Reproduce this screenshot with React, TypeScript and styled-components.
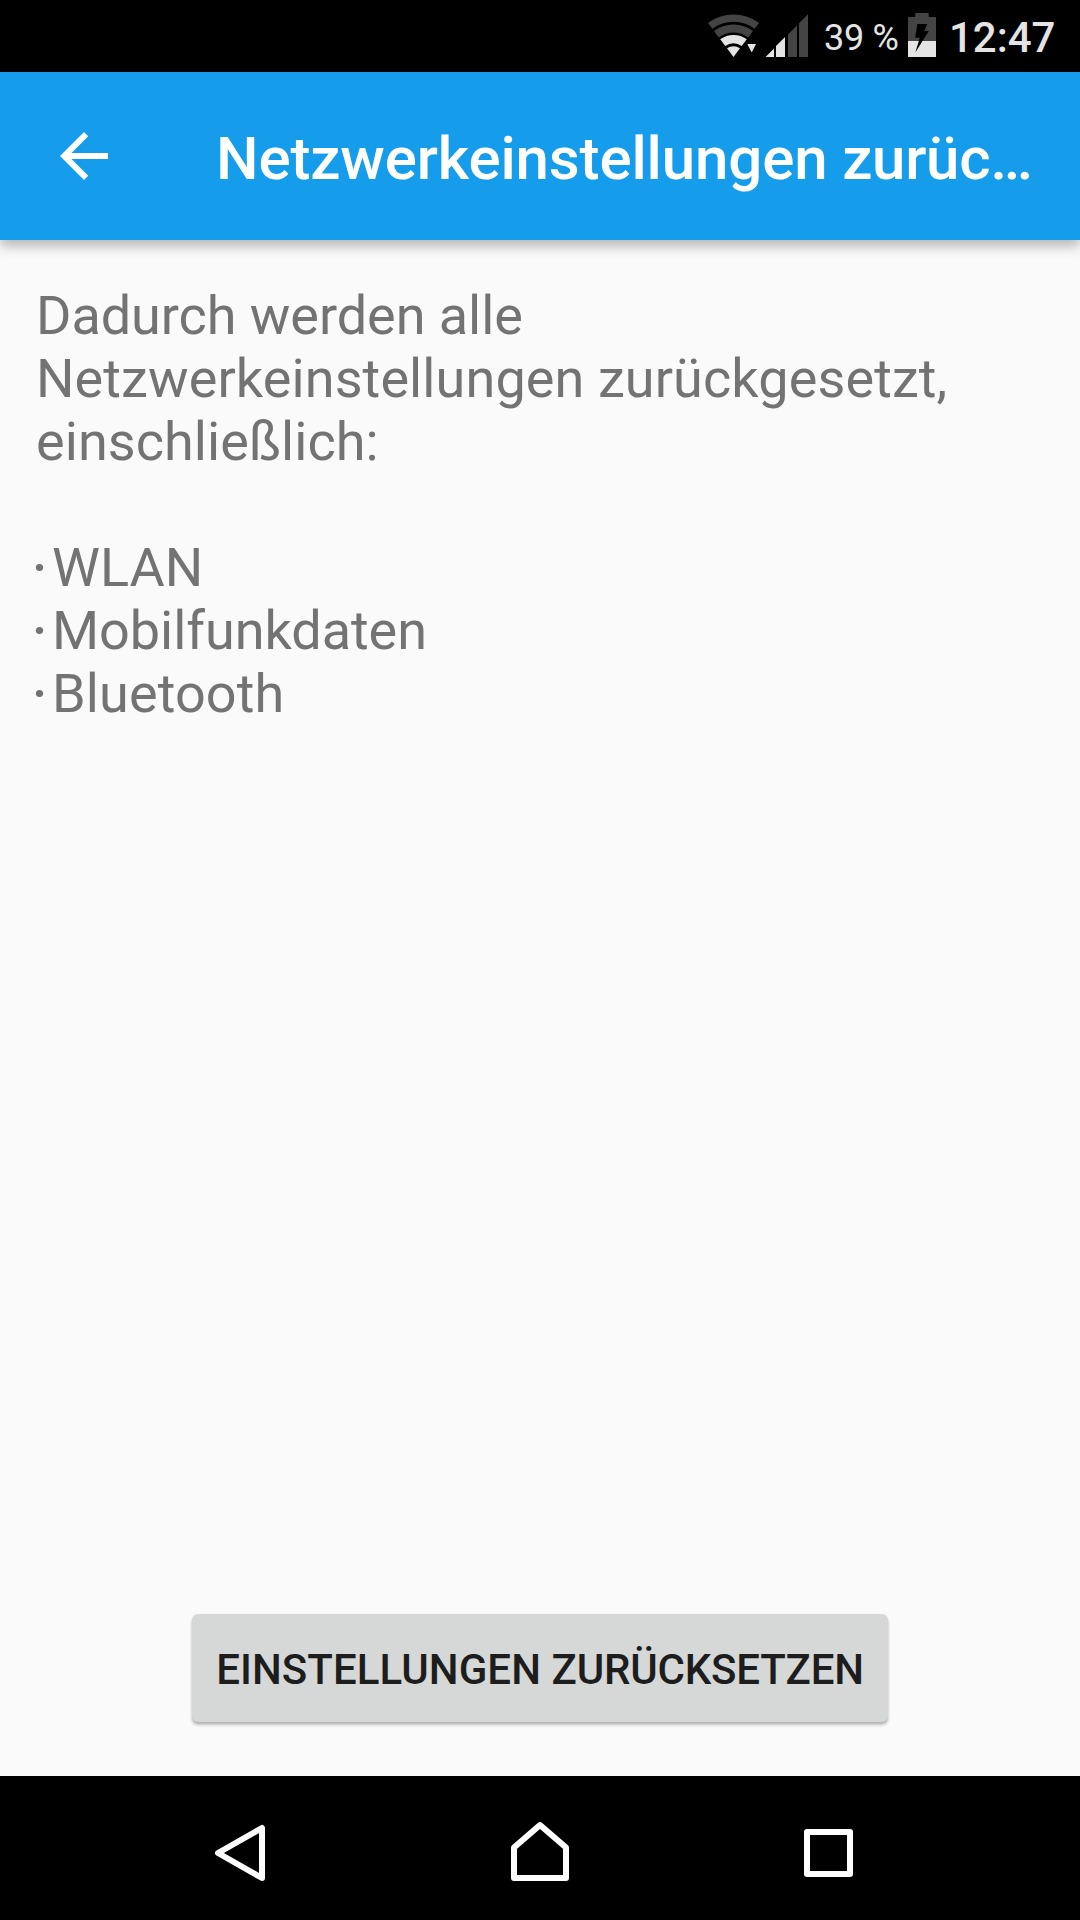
import React from 'react';
import styled, { createGlobalStyle } from 'styled-components';

const Global = createGlobalStyle`
  * { box-sizing: border-box; }
  body { margin: 0; background: #fafafa; }
`;
const Screen = styled.div`
  width: 1080px;
  height: 1920px;
  display: flex;
  flex-direction: column;
  background: #fafafa;
  font-family: Roboto, sans-serif;
  overflow: hidden;
`;
const StatusBar = styled.header`
  height: 72px;
  flex: none;
  background: #000;
  display: flex;
  align-items: center;
  justify-content: flex-end;
  padding-right: 25px;
  color: #e4e4e4;
  white-space: nowrap;
`;
const StatusIcons = styled.svg`
  width: 112px;
  height: 72px;
  flex: none;
`;
const Percent = styled.span`
  width: 76px;
  margin-left: 12px;
  padding-top: 4px;
  font-size: 36px;
  line-height: 72px;
  letter-spacing: -0.3px;
`;
const BatteryIcon = styled.svg`
  width: 32px;
  height: 72px;
  flex: none;
  margin-left: 6px;
`;
const Clock = styled.span`
  width: 106px;
  margin-left: 11px;
  padding-top: 4px;
  font-size: 42px;
  font-weight: 500;
  line-height: 72px;
  letter-spacing: -0.05px;
`;
const AppBar = styled.div`
  height: 168px;
  flex: none;
  display: flex;
  align-items: center;
  padding: 0 48px;
  background: #159dec;
  box-shadow: 0 6px 12px rgba(0, 0, 0, 0.28);
  z-index: 1;
`;
const BackIcon = styled.svg`
  width: 72px;
  height: 72px;
  flex: none;
  margin-right: 96px;
`;
const Title = styled.h1`
  margin: 6px 0 0;
  font-size: 60px;
  font-weight: 500;
  line-height: 70px;
  color: #fff;
  white-space: nowrap;
`;
const Content = styled.main`
  flex: 1;
  display: flex;
  flex-direction: column;
  padding: 44px 36px 54px;
`;
const Line = styled.div<{ $spacing?: number }>`
  font-size: 54px;
  line-height: 63px;
  color: #737373;
  white-space: nowrap;
  letter-spacing: ${(p) => p.$spacing ?? 0}px;
`;
const List = styled.ul`
  list-style: none;
  margin: 63px 0 auto;
  padding: 0;
`;
const Item = styled(Line).attrs({ as: 'li' })`
  display: flex;
`;
const Bullet = styled.span`
  width: 20px;
  margin-left: -4px;
  flex: none;
  font-weight: 500;
`;
const ResetButton = styled.button`
  align-self: center;
  width: 696px;
  height: 108px;
  padding: 3px 0 0;
  border: 0;
  border-radius: 6px;
  background: #d6d8d7;
  box-shadow: 0 3px 3px rgba(0, 0, 0, 0.24), 0 1px 2px rgba(0, 0, 0, 0.08);
  font: 500 42px/49px Roboto, sans-serif;
  color: #1d1d1d;
  white-space: nowrap;
`;
const Word = styled.span<{ $spacing: number }>`
  letter-spacing: ${(p) => p.$spacing}px;
`;
const NavBar = styled.nav`
  height: 144px;
  flex: none;
  display: flex;
  align-items: center;
  justify-content: space-between;
  padding: 0 216px 0 204px;
  background: #000;
`;
const NavIcon = styled.svg`
  width: 72px;
  height: 72px;
  fill: none;
  stroke: #fff;
  stroke-width: 6;
  stroke-linejoin: round;
`;

const DIM = '#444';
const LIT = '#e4e4e4';

/* Arc of the wifi fan, centred on its lower tip. */
const fan = (r: number) =>
  `M${33.5 - 0.6 * r} ${57 - 0.8 * r}A${r} ${r} 0 0 1 ${33.5 + 0.6 * r} ${57 - 0.8 * r}`;

const items = [
  { label: 'WLAN', spacing: 0 },
  { label: 'Mobilfunkdaten', spacing: -0.05 },
  { label: 'Bluetooth', spacing: 0.12 },
];

export default function App() {
  return (
    <Screen>
      <Global />
      <StatusBar>
        <StatusIcons viewBox="0 0 112 72">
          <g fill="none">
            <path d={fan(38.9)} stroke={DIM} strokeWidth="7.4" />
            <path d={fan(28.5)} stroke={DIM} strokeWidth="8" />
            <path d={fan(17.9)} stroke={LIT} strokeWidth="8.4" />
          </g>
          <path d={`${fan(10.8)}L33.5 57Z`} fill={LIT} />
          <path d="M47.3 44H56L51.7 52.5Z" fill={LIT} />
          <path d="M65.5 57L74 48.5V57ZM76 57V46L85 37V57Z" fill={LIT} />
          <path d="M88 57V34.5L97 25.5V57ZM99 57V23.3L108 14.3V57Z" fill={DIM} />
        </StatusIcons>
        <Percent>39 %</Percent>
        <BatteryIcon viewBox="0 0 32 72">
          <path d="M9.3 13H22.7V17H30V41H2V17H9.3Z" fill={DIM} />
          <path d="M2 41H30V57H2Z" fill={LIT} />
          <path d="M11.3 24H21.3L18.3 31H22.8L9.3 52.5L13.8 37.7H9.2Z" fill="#000" />
        </BatteryIcon>
        <Clock>12:47</Clock>
      </StatusBar>
      <AppBar>
        <BackIcon viewBox="0 0 24 24" fill="#fff">
          <path d="M20 11H7.83l5.59-5.59L12 4l-8 8 8 8 1.41-1.41L7.83 13H20v-2z" />
        </BackIcon>
        <Title>
          <Word $spacing={-0.13}>Netzwerkeinstellungen </Word>
          <Word $spacing={-0.3}>zurüc…</Word>
        </Title>
      </AppBar>
      <Content>
        <Line $spacing={-0.05}>Dadurch werden alle</Line>
        <Line $spacing={0.1}>Netzwerkeinstellungen zurückgesetzt,</Line>
        <Line $spacing={0.06}>einschließlich:</Line>
        <List>
          {items.map((item) => (
            <Item key={item.label} $spacing={item.spacing}>
              <Bullet>·</Bullet>
              {item.label}
            </Item>
          ))}
        </List>
        <ResetButton>
          <Word $spacing={0.06}>EINSTELLUNGEN </Word>
          <Word $spacing={-0.2}>ZURÜCKSETZEN</Word>
        </ResetButton>
      </Content>
      <NavBar>
        <NavIcon viewBox="0 0 72 72"><path d="M14 41L58 16V66Z" /></NavIcon>
        <NavIcon viewBox="0 0 72 72"><path d="M42 13L68 35.5V66H16V35.5Z" /></NavIcon>
        <NavIcon viewBox="0 0 72 72"><path d="M15 20H58V62H15Z" /></NavIcon>
      </NavBar>
    </Screen>
  );
}
